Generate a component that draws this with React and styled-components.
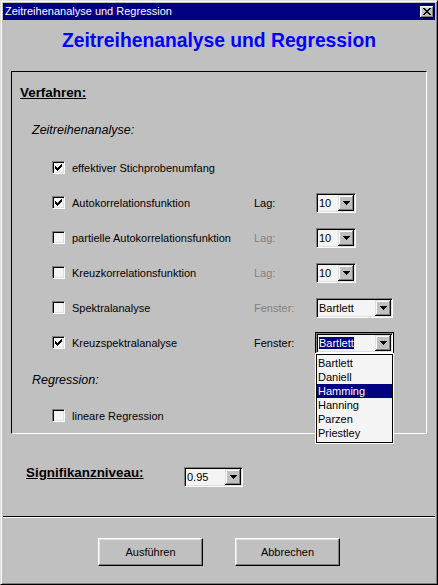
import React from 'react';
import styled, { createGlobalStyle } from 'styled-components';

const GlobalStyle = createGlobalStyle`
    html, body {
        margin: 0;
        padding: 0;
        background: #c0c0c0;
    }
    body {
        font-family: "Liberation Sans", Arial, sans-serif;
    }
`;

const rows = [
    { label: 'effektiver Stichprobenumfang', checked: true },
    { label: 'Autokorrelationsfunktion', checked: true, param: 'Lag:', value: '10', width: 40 },
    { label: 'partielle Autokorrelationsfunktion', param: 'Lag:', value: '10', width: 40, disabled: true },
    { label: 'Kreuzkorrelationsfunktion', param: 'Lag:', value: '10', width: 40, disabled: true },
    { label: 'Spektralanalyse', param: 'Fenster:', value: 'Bartlett', width: 77, disabled: true },
    { label: 'Kreuzspektralanalyse', checked: true, param: 'Fenster:', value: 'Bartlett', width: 77, open: true },
];

const windows = ['Bartlett', 'Daniell', 'Hamming', 'Hanning', 'Parzen', 'Priestley'];

const CheckMark = () => (
    <svg width="7" height="7" viewBox="0 0 7 7" shapeRendering="crispEdges">
        <path
            fill="#000"
            d="M6 0h1v1H6z M5 1h2v1H5z M0 2h1v1H0z M4 2h3v1H4z M0 3h2v1H0z M3 3h3v1H3z M0 4h5v1H0z M1 5h3v1H1z M2 6h1v1H2z"
        />
    </svg>
);

const Arrow = () => (
    <svg width="7" height="4" viewBox="0 0 7 4" shapeRendering="crispEdges">
        <path fill="#000" d="M0 0h7v1h-1v1h-1v1h-1v1h-1v-1h-1v-1h-1v-1h-1z" />
    </svg>
);

const CloseGlyph = () => (
    <svg width="8" height="7" viewBox="0 0 8 7" shapeRendering="crispEdges">
        <path
            fill="#000"
            d="M0 0h2v1H0z M6 0h2v1H6z M1 1h2v1H1z M5 1h2v1H5z M2 2h4v1H2z M3 3h2v1H3z M2 4h4v1H2z M1 5h2v1H1z M5 5h2v1H5z M0 6h2v1H0z M6 6h2v1H6z"
        />
    </svg>
);

const Select = ({ value, width, focused, open }) => (
    <SelectBox width={ width } $focused={ focused }>
        <SelectText>
            { focused ? <Highlight>{ value }</Highlight> : value }
        </SelectText>
        <DropButton><Arrow /></DropButton>
        { open && (
            <List>
                { windows.map((w) => (
                    <ListItem key={ w } $selected={ w === 'Hamming' }>{ w }</ListItem>
                )) }
            </List>
        ) }
    </SelectBox>
);

const App = () => {
    return (
        <>
            <GlobalStyle />
            <Window>
                <TitleBar>
                    <TitleText>Zeitreihenanalyse und Regression</TitleText>
                    <CloseButton><CloseGlyph /></CloseButton>
                </TitleBar>
                <Heading>Zeitreihenanalyse und Regression</Heading>
                <GroupBox>
                    <SectionTitle>Verfahren:</SectionTitle>
                    <SubHeading top={ 21 }>Zeitreihenanalyse:</SubHeading>
                    <Rows>
                        { rows.map((r) => (
                            <Row key={ r.label }>
                                <CheckCell>
                                    <CheckBox>{ r.checked && <CheckMark /> }</CheckBox>
                                    <Label>{ r.label }</Label>
                                </CheckCell>
                                { r.param && (
                                    <>
                                        <ParamLabel $disabled={ r.disabled }>{ r.param }</ParamLabel>
                                        <Select value={ r.value } width={ r.width } focused={ r.open } open={ r.open } />
                                    </>
                                ) }
                            </Row>
                        )) }
                    </Rows>
                    <SubHeading top={ 12 }>Regression:</SubHeading>
                    <Row style={ { marginTop: 10 } }>
                        <CheckCell>
                            <CheckBox />
                            <Label>lineare Regression</Label>
                        </CheckCell>
                    </Row>
                </GroupBox>
                <SignifRow>
                    <SignifLabel>Signifikanzniveau:</SignifLabel>
                    <SelectHold>
                        <Select value="0.95" width={ 59 } />
                    </SelectHold>
                </SignifRow>
                <Separator />
                <Buttons>
                    <Button>Ausführen</Button>
                    <Button>Abbrechen</Button>
                </Buttons>
            </Window>
        </>
    );
};

export default App;


const Window = styled.div`
    width: 438px;
    height: 585px;
    box-sizing: border-box;
    padding: 2px;
    background: #c0c0c0;
    border: 1px solid;
    border-color: #dfdfdf #000 #000 #dfdfdf;
    box-shadow: inset 1px 1px #fff, inset -1px -1px #808080;
    display: flex;
    flex-direction: column;
`;
const TitleBar = styled.div`
    height: 17px;
    background: #000080;
    display: flex;
    align-items: center;
    justify-content: space-between;
    padding: 0 1px 0 2px;
`;
const TitleText = styled.div`
    color: #fff;
    font-size: 11px;
    line-height: 17px;
`;
const CloseButton = styled.div`
    width: 14px;
    height: 12px;
    box-sizing: border-box;
    background: #c0c0c0;
    display: flex;
    align-items: center;
    justify-content: center;
    box-shadow: inset -1px -1px #000, inset 1px 1px #fff, inset -2px -2px #808080, inset 2px 2px #dfdfdf;
`;
const Heading = styled.div`
    padding: 11px 0 21px;
    text-align: center;
    color: #0000ff;
    font-weight: bold;
    font-size: 19.3px;
    line-height: 19px;
`;
const GroupBox = styled.div`
    position: relative;
    margin: 0 8px;
    height: 363px;
    box-sizing: border-box;
    border: 1px solid;
    border-color: #000 #fff #fff #000;
    display: flex;
    flex-direction: column;
`;
const SectionTitle = styled.div`
    margin-top: 13px;
    padding-left: 8px;
    font-size: 13.4px;
    font-weight: bold;
    line-height: 16px;
    text-decoration: underline;
`;
const SubHeading = styled.div`
    margin-top: ${({ top }) => top}px;
    padding-left: 20px;
    font-size: 12.5px;
    font-style: italic;
    line-height: 16px;
`;
const Rows = styled.div`
    margin-top: 12px;
    display: flex;
    flex-direction: column;
`;
const Row = styled.div`
    height: 35px;
    padding-left: 40px;
    display: flex;
    align-items: center;
`;
const CheckCell = styled.div`
    width: 202px;
    display: flex;
    align-items: center;
`;
const CheckBox = styled.span`
    width: 13px;
    height: 13px;
    box-sizing: border-box;
    border: 1px solid;
    border-color: #808080 #fff #fff #808080;
    box-shadow: inset 1px 1px #000, inset -1px -1px #dfdfdf;
    background: #f4f4f4;
    display: flex;
    align-items: center;
    justify-content: center;
`;
const Label = styled.span`
    margin-left: 7px;
    font-size: 11px;
    white-space: nowrap;
`;
const ParamLabel = styled.span`
    width: 62px;
    font-size: 11px;
    color: ${({ $disabled }) => $disabled ? '#808080' : '#000'};
`;
const SelectBox = styled.div`
    position: relative;
    width: ${({ width }) => width}px;
    height: 20px;
    box-sizing: border-box;
    padding: 1px;
    border: 1px solid;
    border-color: #808080 #fff #fff #808080;
    box-shadow: inset 1px 1px #000, inset -1px -1px #dfdfdf;
    background: #f4f4f4;
    display: flex;
    align-items: center;
    outline: ${({ $focused }) => $focused ? '1px solid #000' : 'none'};
`;
const SelectText = styled.div`
    flex: 1;
    padding-left: 1px;
    font-size: 11px;
    line-height: 12px;
    white-space: nowrap;
    overflow: hidden;
`;
const Highlight = styled.span`
    display: inline-block;
    background: #000080;
    color: #fff;
    line-height: 12px;
`;
const DropButton = styled.div`
    width: 16px;
    height: 16px;
    box-sizing: border-box;
    background: #c0c0c0;
    display: flex;
    align-items: center;
    justify-content: center;
    box-shadow: inset -1px -1px #000, inset 1px 1px #dfdfdf, inset -2px -2px #808080, inset 2px 2px #fff;
`;
const List = styled.div`
    position: absolute;
    left: -1px;
    top: 20px;
    width: 77px;
    height: 89px;
    box-sizing: border-box;
    padding: 1px 0 2px;
    border: 1px solid #000;
    outline: 1px solid #fff;
    background: #f4f4f4;
    z-index: 2;
`;
const ListItem = styled.div`
    height: 14px;
    line-height: 14px;
    padding-left: 1px;
    font-size: 11px;
    background: ${({ $selected }) => $selected ? '#000080' : 'transparent'};
    color: ${({ $selected }) => $selected ? '#fff' : '#000'};
`;
const SignifRow = styled.div`
    margin-top: 31px;
    height: 22px;
    padding-left: 23px;
    display: flex;
    align-items: flex-start;
`;
const SignifLabel = styled.div`
    width: 158px;
    font-size: 13.4px;
    font-weight: bold;
    line-height: 16px;
    text-decoration: underline;
`;
const SelectHold = styled.div`
    margin-top: 2px;
`;
const Separator = styled.div`
    margin-top: 29px;
    height: 1px;
    background: #000;
    border-bottom: 1px solid #fff;
`;
const Buttons = styled.div`
    margin-top: 20px;
    display: flex;
    justify-content: center;
    gap: 32px;
`;
const Button = styled.button`
    width: 105px;
    height: 28px;
    box-sizing: border-box;
    padding: 0;
    background: #c0c0c0;
    border: 1px solid;
    border-color: #fff #000 #000 #fff;
    box-shadow: inset -1px -1px #808080, inset 1px 1px #dfdfdf;
    font-family: "Liberation Sans", Arial, sans-serif;
    font-size: 11px;
    color: #000;
`;
